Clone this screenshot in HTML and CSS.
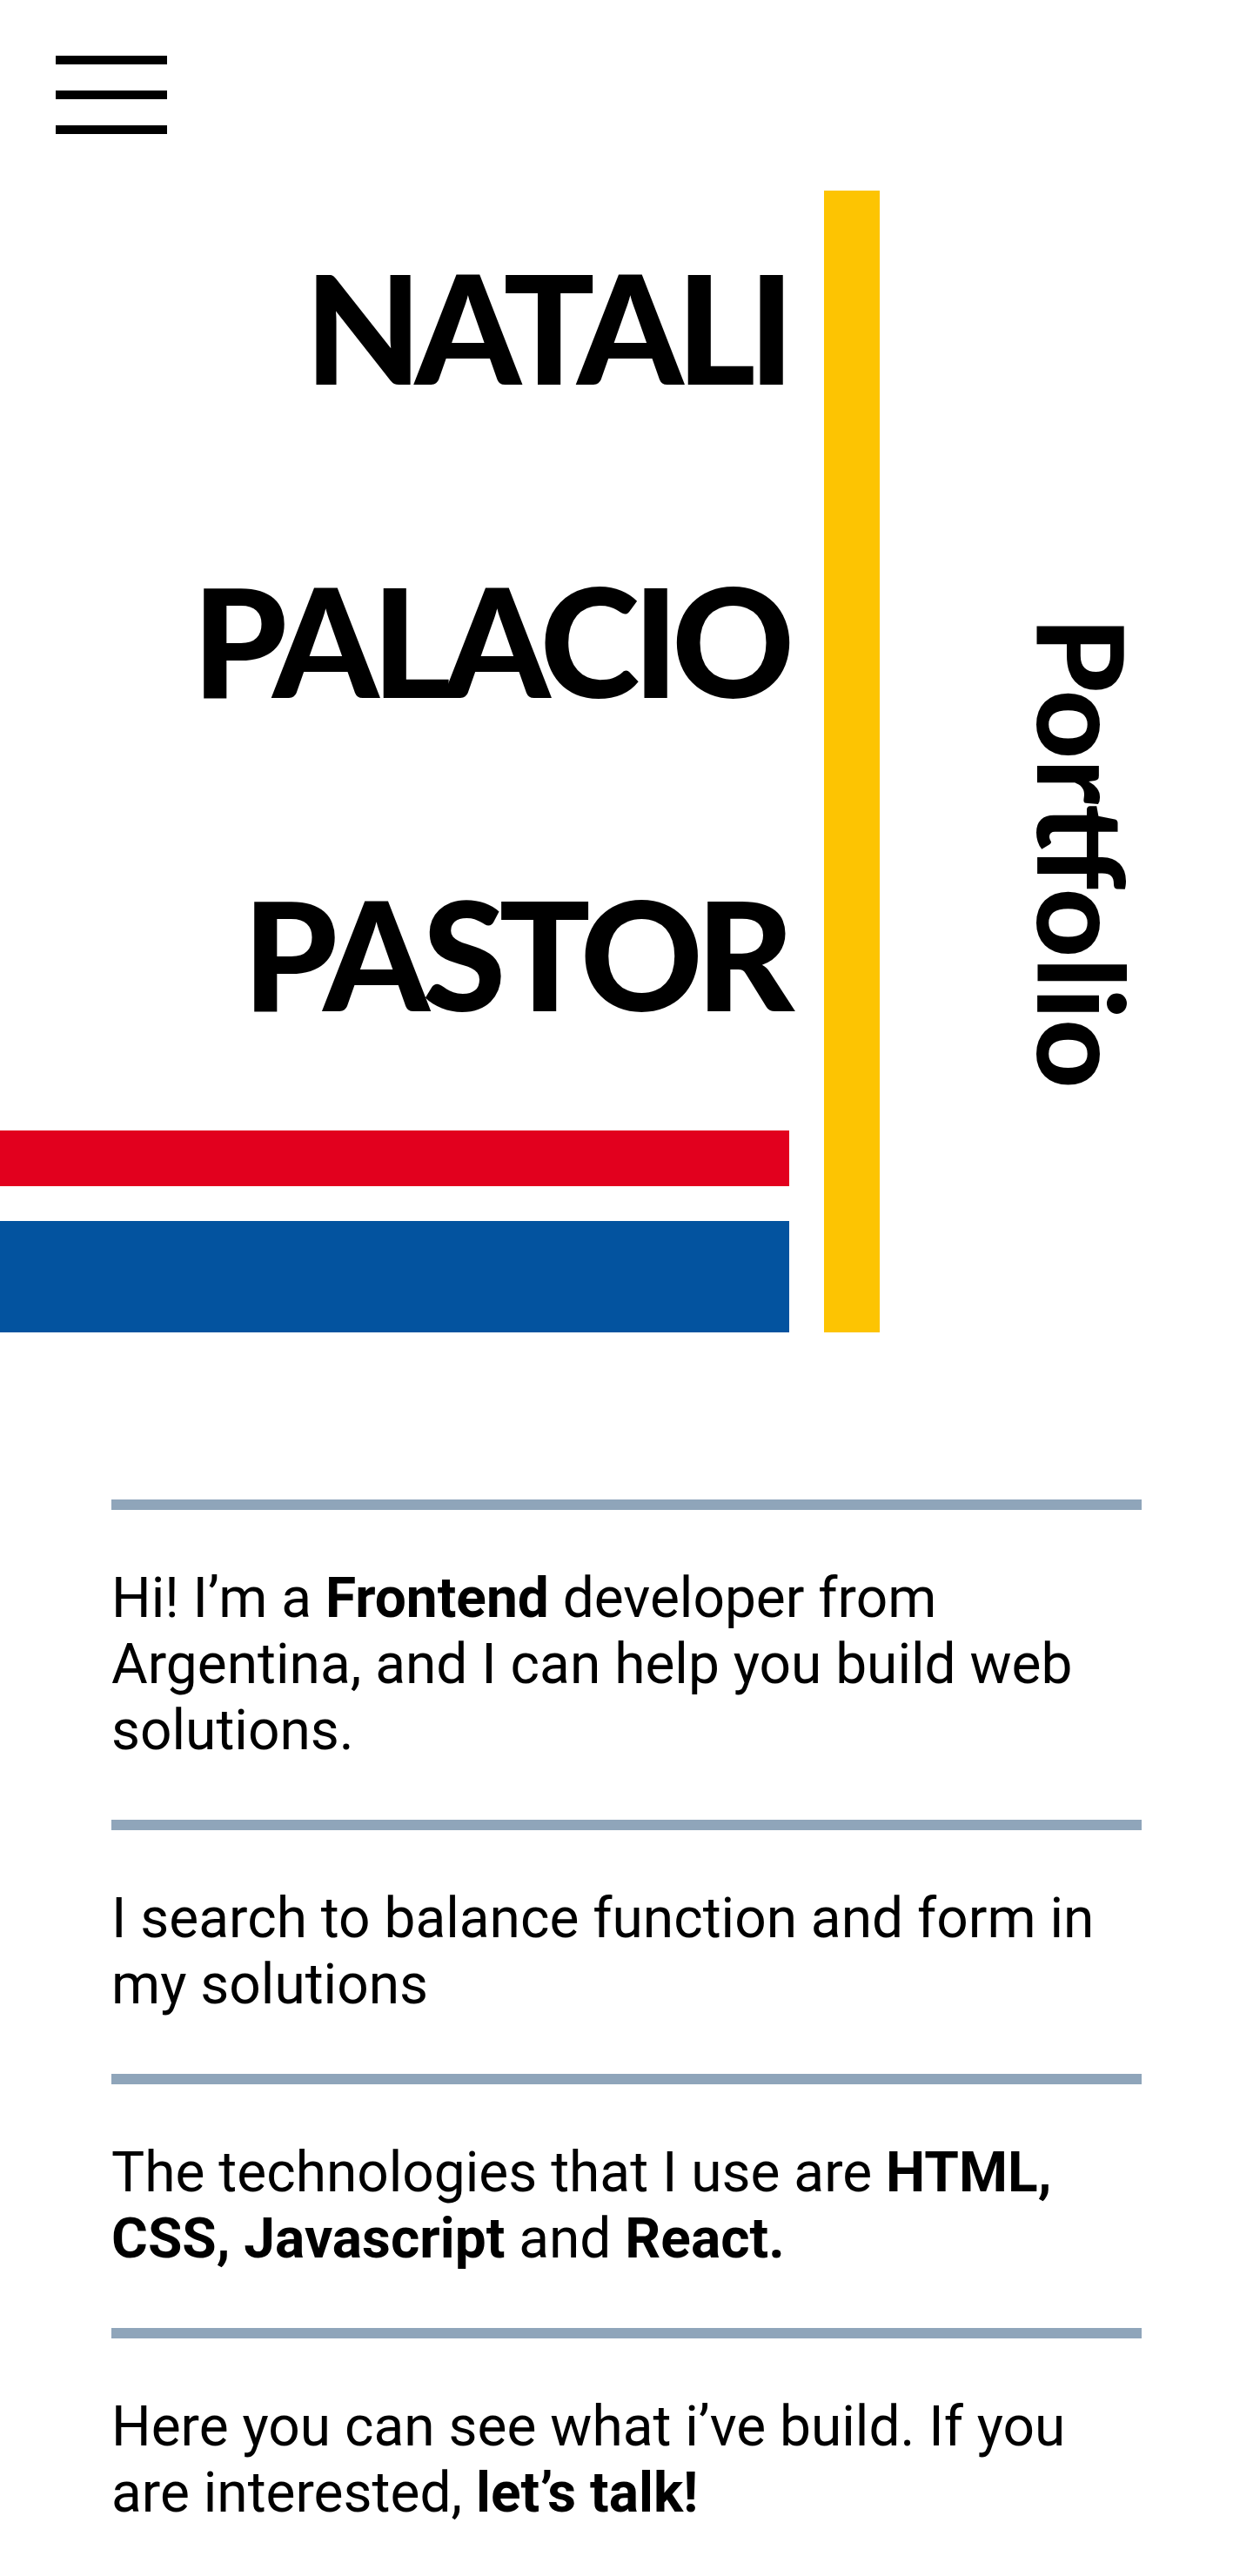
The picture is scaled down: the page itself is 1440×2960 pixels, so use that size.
FILE: index.html
```html
<!DOCTYPE html>
<html lang="en">
<head>
<meta charset="utf-8">
<title>Natali Palacio Pastor — Portfolio</title>
<link rel="stylesheet" href="styles.css">
</head>
<body>
<header class="topbar">
  <button class="menu-btn" type="button" aria-label="Open menu">
    <span class="menu-line"></span>
    <span class="menu-line"></span>
    <span class="menu-line"></span>
  </button>
</header>
<section class="hero">
  <div class="hero-main">
    <h1 class="name">
      <span class="name-line">NATALI</span>
      <span class="name-line">PALACIO</span>
      <span class="name-line">PASTOR</span>
    </h1>
    <div class="stripe stripe-red"></div>
    <div class="stripe stripe-blue"></div>
  </div>
  <div class="stripe-yellow"></div>
  <div class="hero-side">
    <p class="portfolio">Portfolio</p>
  </div>
</section>
<main class="about">
  <p class="about-item">Hi! I’m a <strong>Frontend</strong> developer from Argentina, and I can help you build web solutions.</p>
  <p class="about-item">I search to balance function and form in my solutions</p>
  <p class="about-item">The technologies that I use are <strong>HTML, CSS, Javascript</strong> and <strong>React.</strong></p>
  <p class="about-item">Here you can see what i’ve build. If you are interested, <strong>let’s talk!</strong></p>
</main>
</body>
</html>
```
FILE: styles.css
```css
html, body {
  margin: 0;
  padding: 0;
  background: #ffffff;
}

body {
  color: #000000;
  font-family: Roboto, "Liberation Sans", Arial, sans-serif;
}

.topbar {
  padding: 64px 64px 65px;
}

.menu-btn {
  display: flex;
  flex-direction: column;
  gap: 30px;
  width: 128px;
  padding: 0;
  margin: 0;
  border: 0;
  background: none;
  cursor: pointer;
}

.menu-line {
  display: block;
  height: 10px;
  background: #000000;
}

.hero {
  display: flex;
  align-items: stretch;
}

.hero-main {
  width: 907px;
  display: flex;
  flex-direction: column;
}

.name {
  margin: 0;
  padding-right: 2px;
  font-family: Lato, "Noto Sans", sans-serif;
  font-weight: 900;
  font-size: 174px;
  text-align: right;
  letter-spacing: -8px;
}

.name-line {
  display: block;
  line-height: 312px;
  margin-bottom: 48px;
}

.stripe-red {
  height: 64px;
  background: #e2001e;
}

.stripe-blue {
  height: 128px;
  margin-top: 40px;
  background: #03539f;
}

.stripe-yellow {
  width: 64px;
  margin-left: 40px;
  background: #fdc402;
}

.hero-side {
  flex: 1;
  display: flex;
  justify-content: center;
  padding-top: 490px;
  padding-left: 38px;
}

.portfolio {
  margin: 0;
  writing-mode: vertical-rl;
  font-family: Lato, "Noto Sans", sans-serif;
  font-weight: 900;
  font-size: 138px;
  line-height: 1;
}

.about {
  margin: 192px 128px 0;
}

.about-item {
  margin: 0;
  border-top: 12px solid #8fa5ba;
  padding: 64px 0;
  font-size: 64px;
  line-height: 76px;
}

.about-item strong {
  font-weight: 700;
}
```
